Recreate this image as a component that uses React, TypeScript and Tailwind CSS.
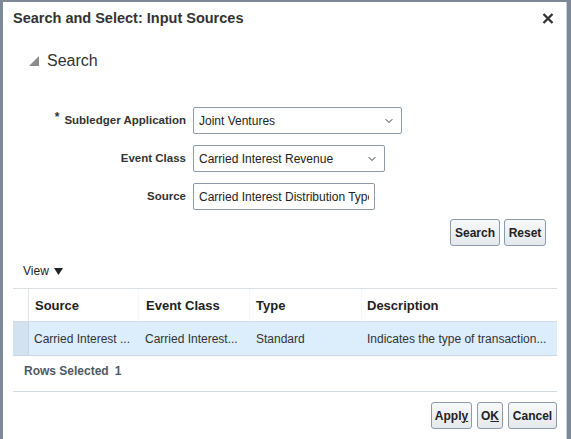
import { ChevronDown } from "lucide-react";

const cols = "grid grid-cols-[16px_110px_111px_112px_1fr]";

function Btn({ w, children }: { w: string; children: React.ReactNode }) {
  return (
    <button
      className={`${w} h-[27px] rounded-[3px] border border-[#8d9aa7] bg-gradient-to-b from-[#f7f9fa] to-[#e4e9ee] text-[12px] font-bold text-[#222] flex items-center justify-center`}
    >
      {children}
    </button>
  );
}

function Field({ label, required, width, value, select }: { label: string; required?: boolean; width: string; value: string; select?: boolean }) {
  return (
    <div className="flex items-center h-[27px]">
      <div className="w-[183px] text-right text-[11.5px] font-bold text-[#333] leading-none">
        {required && <span className="relative -top-[3px] mr-[5px] text-[12px] text-[#333]">*</span>}
        {label}
      </div>
      <div
        className={`${width} ml-[7px] h-[27px] border border-[#8d9aa7] rounded-[2px] bg-white flex items-center pl-[5px] pr-[5px] overflow-hidden`}
      >
        <span className="flex-1 whitespace-nowrap overflow-hidden text-[12px] text-[#222]">{value}</span>
        {select && <ChevronDown size={12} strokeWidth={2} className="text-[#333] shrink-0 mr-[1px]" />}
      </div>
    </div>
  );
}

export default function App() {
  return (
    <div className="w-[571px] h-[439px] overflow-hidden bg-white border-l-[3px] border-t-[2px] border-r-4 border-[#7d8996] font-['Liberation_Sans',Arial,sans-serif]">
      <div className="h-full border-r border-[#c9d0d7] flex flex-col">
        {/* title */}
        <div className="flex items-center justify-between pl-[10px] pr-[12px] pt-[6px] h-[26px]">
          <span className="text-[14.5px] font-bold text-[#333] leading-[20px]">Search and Select: Input Sources</span>
          <svg width="12" height="11" viewBox="0 0 12 11" className="mt-[1px]">
            <path d="M1.5 1 L10.5 10 M10.5 1 L1.5 10" stroke="#333" strokeWidth="2.4" />
          </svg>
        </div>

        {/* search heading */}
        <div className="flex items-center mt-[23px] ml-[26px] h-[20px]">
          <svg width="10" height="10" viewBox="0 0 10 10">
            <polygon points="10,0 10,10 0,10" fill="#8c8c8c" />
          </svg>
          <span className="ml-[8px] text-[16px] text-[#333] leading-[20px]">Search</span>
        </div>

        {/* form */}
        <div className="mt-[36px] flex flex-col gap-[11px]">
          <Field label="Subledger Application" required width="w-[209px]" value="Joint Ventures" select />
          <Field label="Event Class" width="w-[192px]" value="Carried Interest Revenue" select />
          <Field label="Source" width="w-[182px]" value="Carried Interest Distribution Type" />
        </div>

        <div className="mt-[9px] flex justify-end gap-[4px] mr-[20px]">
          <Btn w="w-[50px]">Search</Btn>
          <Btn w="w-[42px]">Reset</Btn>
        </div>

        {/* view */}
        <div className="mt-[17px] ml-[20px] flex items-center h-[16px] text-[12px] text-[#222]">
          View
          <svg width="9" height="7" viewBox="0 0 9 7" className="ml-[5px]">
            <polygon points="0,0 9,0 4.5,7" fill="#222" />
          </svg>
        </div>

        {/* table */}
        <div className="mt-[9px] ml-[10px] mr-[9px] border-t border-[#d9dfe5]">
          <div className={`${cols} h-[33px] border-b border-[#d3dce4] text-[13px] font-bold text-[#222]`}>
            <div className="border-r border-[#dfe4e9]" />
            <div className="flex items-center pl-[6px] pt-[1px] border-r border-[#f5f7f8]">Source</div>
            <div className="flex items-center pl-[7px] pt-[1px] border-r border-[#f5f7f8]">Event Class</div>
            <div className="flex items-center pl-[6px] pt-[1px] border-r border-[#f5f7f8]">Type</div>
            <div className="flex items-center pl-[5px] pt-[1px]">Description</div>
          </div>
          <div className={`${cols} h-[34px] border-b border-[#c9d6e1] bg-[#dcedfc] text-[12px] text-[#333]`}>
            <div className="bg-[#d3e2ef] border-r border-[#c9d6e1]" />
            <div className="flex items-center pl-[5px] whitespace-nowrap overflow-hidden">Carried Interest ...</div>
            <div className="flex items-center pl-[6px] whitespace-nowrap overflow-hidden">Carried Interest...</div>
            <div className="flex items-center pl-[6px] whitespace-nowrap overflow-hidden">Standard</div>
            <div className="flex items-center pl-[5px] whitespace-nowrap overflow-hidden">Indicates the type of transaction...</div>
          </div>
        </div>

        <div className="mt-[7px] ml-[21px] h-[16px] flex items-center text-[12px] font-bold text-[#4f5964]">
          Rows Selected<span className="ml-[6px]">1</span>
        </div>

        <div className="mt-[12px] ml-[10px] mr-[9px] border-t border-[#d3dbe2]" />

        <div className="mt-[10px] flex justify-end gap-[5px] mr-[9px]">
          <Btn w="w-[41px]">
            Appl<span className="underline">y</span>
          </Btn>
          <Btn w="w-[26px]">
            O<span className="underline">K</span>
          </Btn>
          <Btn w="w-[49px]">Cancel</Btn>
        </div>
      </div>
    </div>
  );
}
